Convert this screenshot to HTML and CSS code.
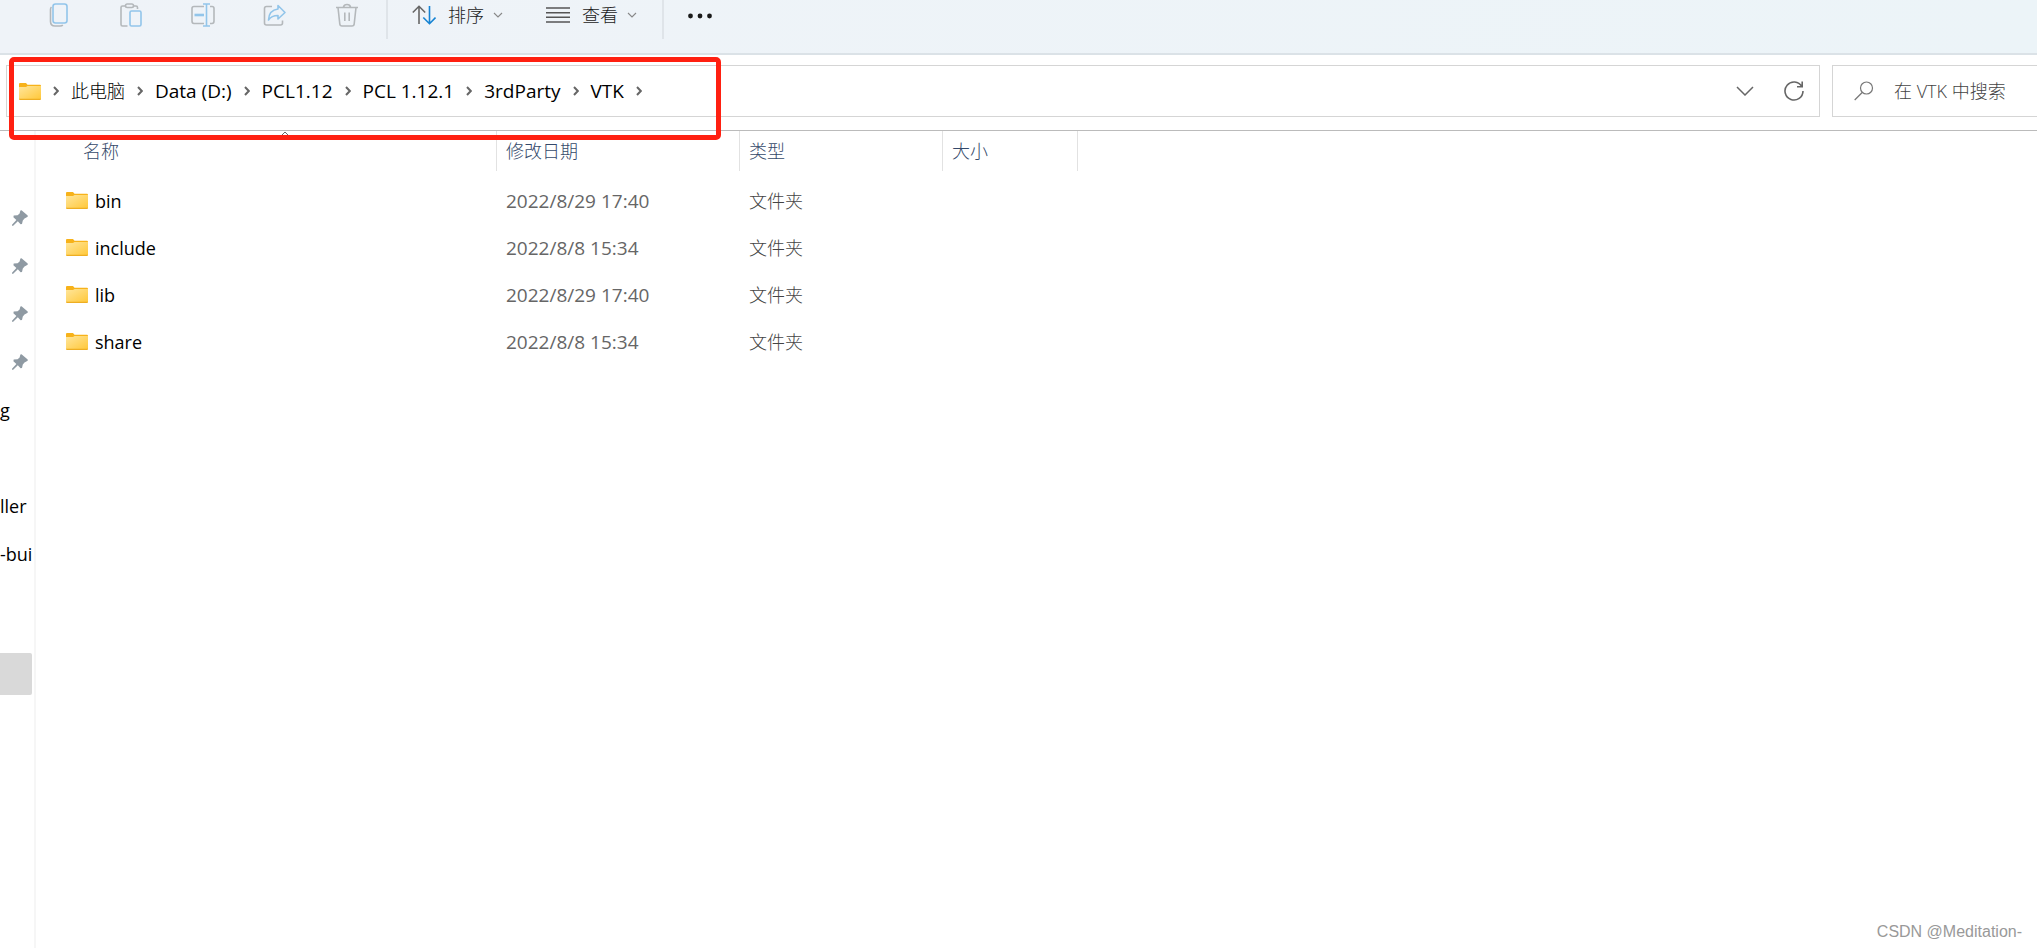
FILE: index.html
```html
<!DOCTYPE html>
<html lang="zh-CN">
<head>
<meta charset="utf-8">
<title>VTK</title>
<link rel="stylesheet" href="styles.css">
</head>
<body>
<svg class="defs" aria-hidden="true">
  <defs>
    <linearGradient id="paper" x1="0" y1="0" x2="1" y2="1"><stop offset="0" stop-color="#ffe69c"/><stop offset="1" stop-color="#ffc83a"/></linearGradient>
    <symbol id="folder" viewBox="0 0 22 17">
      <path d="M0 1Q0 0 1 0H7L8.500 1.800H21Q22 1.800 22 3V9H0Z" fill="#f7b21a"/>
      <path d="M0 4H7L8.500 3H22V16H0Z" fill="url(#paper)"/>
      <path d="M0 15.800H22V16Q22 17 21 17H1Q0 17 0 16Z" fill="#eeae22"/>
    </symbol>
    <symbol id="pin" viewBox="0 0 16 16">
      <path d="M9.500 .3 15.700 5.500V6.800L12.500 8.400 10.800 10.500 10 14 8.600 14.300 5.800 11.300 1.200 15.700 0 15.700V14.700L4.400 10 1.400 7.200 1.700 5.600 5.600 5.200 7.600 3.600 8.400.6Z" fill="#8f9aa3"/>
    </symbol>
    <symbol id="next" viewBox="0 0 6 10"><path d="M1 1 4.800 5 1 9" fill="none" stroke="#666" stroke-width="2"/></symbol>
    <symbol id="down" viewBox="0 0 10 6"><path d="M1 1 5 5 9 1" fill="none" stroke="#888" stroke-width="1.100"/></symbol>
  </defs>
</svg>

<header class="toolbar">
  <button class="tool" aria-label="复制"><svg width="24" height="24" viewBox="0 0 24 24" fill="none" stroke-width="1.600"><path d="M4.500 4Q3.500 4.800 3.500 6.500V18.500Q3.500 23 8 23H13Q15 23 15.800 22" stroke="#b4b8bb"/><rect x="6" y="1" width="14" height="19" rx="2.500" stroke="#92c5ea"/></svg></button>
  <button class="tool" aria-label="粘贴"><svg width="24" height="24" viewBox="0 0 24 24" fill="none" stroke-width="1.600"><path d="M7 3H3.500Q2 3 2 4.500V21.500Q2 23 3.500 23H8.500M14 3H17Q18.500 3 18.500 4.500V6" stroke="#b4b8bb"/><rect x="6.500" y="1" width="8" height="3.500" rx="1.700" stroke="#b4b8bb"/><rect x="11" y="8" width="11" height="15" rx="1.500" stroke="#92c5ea"/></svg></button>
  <button class="tool" aria-label="重命名"><svg width="24" height="24" viewBox="0 0 24 24" fill="none" stroke-width="1.600"><path d="M13 3.500H3Q1 3.500 1 5.500V18Q1 20.500 3 20.500H13M19 3.500H21Q23 3.500 23 5.500V18Q23 20.500 21 20.500H19" stroke="#b4b8bb"/><path d="M12 1H19M12 23H19M15.500 1V23" stroke="#92c5ea"/><path d="M3.500 12H13" stroke="#92c5ea" stroke-width="2.600"/></svg></button>
  <button class="tool" aria-label="共享"><svg width="24" height="24" viewBox="0 0 24 24" fill="none" stroke-width="1.600" stroke-linejoin="round"><path d="M9 3.500H3.500Q1.500 3.500 1.500 5.500V20Q1.500 22 3.500 22H17.500Q19.500 22 19.500 20V17.500" stroke="#b4b8bb"/><path d="M15 2.500 22 9.500 15 16V12.500Q8.500 12.500 5.500 17 6 7 15 6Z" stroke="#92c5ea"/></svg></button>
  <button class="tool" aria-label="删除"><svg width="24" height="24" viewBox="0 0 24 24" fill="none" stroke="#b4b8bb" stroke-width="1.600"><path d="M1 4.500H23M8.500 4Q9 1.500 12 1.500T15.500 4M3 4.500 4.800 21Q5 23 7 23H17Q19 23 19.200 21L21 4.500M9.800 9.500V18M14.200 9.500V18"/></svg></button>
  <span class="divider"></span>
  <button class="menu sort"><svg width="24" height="20" viewBox="0 0 24 20" fill="none" stroke-width="1.600"><path d="M7 19V1.500M.8 7.500 7 1.300 13.200 7.500" stroke="#666"/><path d="M17.500 1V18.500M11.300 12.500 17.500 18.700 23.500 12.500" stroke="#1583d3"/></svg><span>排序</span><svg width="10" height="6"><use href="#down"/></svg></button>
  <button class="menu view"><svg width="24" height="18" viewBox="0 0 24 18" stroke="#555" stroke-width="1.400"><path d="M0 2H24M0 6.700H24M0 11.300H24M0 16H24"/></svg><span>查看</span><svg width="10" height="6"><use href="#down"/></svg></button>
  <span class="divider"></span>
  <button class="more" aria-label="更多"><svg width="24" height="6" viewBox="0 0 24 6" fill="#1a1a1a"><circle cx="2.500" cy="3" r="2.400"/><circle cx="12" cy="3" r="2.400"/><circle cx="21.500" cy="3" r="2.400"/></svg></button>
</header>

<div class="location">
  <nav class="address" aria-label="地址">
    <svg class="folder" width="22" height="17"><use href="#folder"/></svg>
    <svg class="next" width="6" height="10"><use href="#next"/></svg>
    <a class="han" href="#">此电脑</a><svg class="next" width="6" height="10"><use href="#next"/></svg>
    <a href="#">Data (D:)</a><svg class="next" width="6" height="10"><use href="#next"/></svg>
    <a href="#">PCL1.12</a><svg class="next" width="6" height="10"><use href="#next"/></svg>
    <a href="#">PCL 1.12.1</a><svg class="next" width="6" height="10"><use href="#next"/></svg>
    <a href="#">3rdParty</a><svg class="next" width="6" height="10"><use href="#next"/></svg>
    <a href="#">VTK</a><svg class="next" width="6" height="10"><use href="#next"/></svg>
    <span class="actions">
      <button aria-label="以前的位置"><svg width="18" height="10" viewBox="0 0 18 10" fill="none" stroke="#666" stroke-width="1.500"><path d="M1 1 9 9 17 1"/></svg></button>
      <button aria-label="刷新"><svg width="20" height="20" viewBox="0 0 20 20" fill="none" stroke="#666" stroke-width="1.600"><path d="M17.800 5.500A9 9 0 1 0 19 10M18.200 .5V5.700H13"/></svg></button>
    </span>
  </nav>
  <label class="search"><svg width="20" height="20" viewBox="0 0 20 20" fill="none" stroke="#777" stroke-width="1.200"><circle cx="12.500" cy="7" r="6"/><path d="M8.200 11.500.7 19"/></svg><input type="search" placeholder="在 VTK 中搜索" aria-label="在 VTK 中搜索"></label>
</div>

<div class="body">
  <aside class="sidebar">
    <div class="item pinned"><svg width="16" height="16"><use href="#pin"/></svg></div>
    <div class="item pinned"><svg width="16" height="16"><use href="#pin"/></svg></div>
    <div class="item pinned"><svg width="16" height="16"><use href="#pin"/></svg></div>
    <div class="item pinned"><svg width="16" height="16"><use href="#pin"/></svg></div>
    <div class="item">g</div>
    <div class="item"></div>
    <div class="item">ller</div>
    <div class="item">-bui</div>
    <div class="item"></div>
    <div class="item selected"></div>
  </aside>
  <main class="files">
    <svg class="ascending" width="8" height="5" viewBox="0 0 8 5" fill="none" stroke="#666"><path d="M.5 4.500 4 1 7.500 4.500"/></svg>
    <table>
      <colgroup><col class="c-name"><col class="c-date"><col class="c-type"><col class="c-size"></colgroup>
      <thead><tr><th>名称</th><th>修改日期</th><th>类型</th><th>大小</th></tr></thead>
      <tbody>
        <tr><td><span class="name"><svg width="22" height="17"><use href="#folder"/></svg>bin</span></td><td class="date">2022/8/29 17:40</td><td class="han">文件夹</td><td></td></tr>
        <tr><td><span class="name"><svg width="22" height="17"><use href="#folder"/></svg>include</span></td><td class="date">2022/8/8 15:34</td><td class="han">文件夹</td><td></td></tr>
        <tr><td><span class="name"><svg width="22" height="17"><use href="#folder"/></svg>lib</span></td><td class="date">2022/8/29 17:40</td><td class="han">文件夹</td><td></td></tr>
        <tr><td><span class="name"><svg width="22" height="17"><use href="#folder"/></svg>share</span></td><td class="date">2022/8/8 15:34</td><td class="han">文件夹</td><td></td></tr>
      </tbody>
    </table>
  </main>
</div>
<div class="highlight"></div>
<div class="watermark">CSDN @Meditation-</div>
</body>
</html>
```
FILE: styles.css
```css
* { box-sizing: border-box; }
body {
  margin: 0;
  min-height: 100vh;
  display: flex;
  flex-direction: column;
  background: #fff;
  color: #000;
  font: 18px/24px "Open Sans", "Noto Sans CJK SC", sans-serif;
}
svg { display: block; flex: none; }
button { border: 0; padding: 0; background: none; font: inherit; color: inherit; }
a { color: inherit; text-decoration: none; }
.defs { position: absolute; width: 0; height: 0; }

.toolbar {
  display: flex;
  align-items: flex-start;
  height: 55px;
  padding-left: 23px;
  background: linear-gradient(90deg, #eff3f8, #ecf4f8);
  border-bottom: 2px solid #dbe2e7;
}
.tool { width: 72px; height: 30px; display: flex; align-items: center; justify-content: center; }
.divider { width: 2px; height: 39px; margin-left: 3px; background: #dfe4e9; }
.menu { display: flex; align-items: center; height: 30px; color: #1a1a1a; font-weight: 300; }
.menu span { margin: 0 9px 0 12px; }
.sort { margin-left: 24px; }
.view { margin-left: 43px; margin-right: 22px; }
.more { height: 32px; margin-left: 24px; }

.location {
  display: flex;
  gap: 12px;
  padding: 10px 0 13px 6px;
  border-bottom: 1px solid #bbb;
}
.address, .search { display: flex; align-items: center; height: 52px; border: 1px solid #d5d5d5; }
.address { flex: 1; padding-left: 12px; font-size: 19px; }
.address .next { margin: 0 12px; }
.han { font-size: 18px; font-weight: 300; }
.actions { display: flex; align-items: center; gap: 30px; margin-left: auto; padding-right: 15px; }
.search { width: 205px; gap: 20px; padding-left: 21px; border-right: 0; }
.search input {
  flex: 1;
  min-width: 0;
  padding: 0;
  border: 0;
  outline: 0;
  font: inherit;
  font-weight: 300;
}
.search input::placeholder { color: #444; opacity: 1; }

.body { flex: 1; display: flex; }
.sidebar { width: 36px; padding-top: 63px; border-right: 2px solid #f6f6f6; overflow: hidden; }
.item { display: flex; align-items: center; height: 48px; white-space: nowrap; }
.pinned { padding-left: 12px; }
.selected { height: 42px; width: 32px; margin-top: 27px; background: #d9d9d9; border-radius: 0 2px 2px 0; }

.files { flex: 1; position: relative; }
.ascending { position: absolute; left: 245px; top: 0; }
table { table-layout: fixed; width: 1042px; border-collapse: separate; border-spacing: 0; }
.c-name { width: 461px; }
.c-date { width: 243px; }
.c-type { width: 203px; }
.c-size { width: 135px; }
th { height: 40px; padding: 0 9px; border-right: 1px solid #e2e2e2; text-align: left; font-weight: 300; color: #34496a; }
th:first-child { padding-left: 47px; }
tbody::before { content: ""; display: block; height: 6px; }
td { height: 47px; padding: 0 9px; color: #666; }
td:first-child { padding-left: 30px; color: #000; }
td.han { color: #444; }
.date { font-size: 19px; }
.name { display: flex; align-items: center; gap: 7px; }

.highlight { position: absolute; left: 9px; top: 57px; width: 712px; height: 83px; border: 5px solid #ff2011; border-radius: 5px; }
.watermark { position: absolute; right: 15px; bottom: 4px; font: 16px/24px "Liberation Sans", sans-serif; color: #999; }
```
